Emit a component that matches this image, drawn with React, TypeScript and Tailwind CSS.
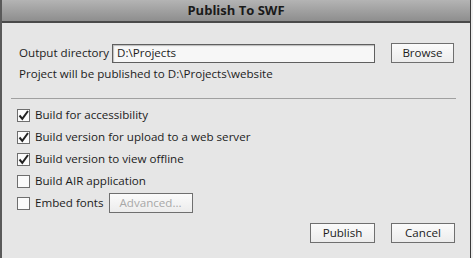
import React from 'react';

const Check: React.FC<{ checked?: boolean }> = ({ checked }) => (
  <span className="w-[13px] h-[13px] border border-[#6e6e6e] bg-[#fbfbfb] flex items-center justify-center shrink-0">
    {checked && (
      <svg width="11" height="11" viewBox="0 0 11 11">
        <path d="M1.5 5.5 L4.3 8.8 L10 1" fill="none" stroke="#222" strokeWidth="2" />
      </svg>
    )}
  </span>
);

const Btn: React.FC<{ label: string; className?: string; disabled?: boolean }> = ({ label, className = '', disabled }) => (
  <div
    className={`h-[20px] border border-[#6f6f6f] bg-gradient-to-b from-[#fbfbfb] to-[#ececec] flex items-center justify-center whitespace-nowrap ${
      disabled ? 'text-[#a8a8a8]' : 'text-[#1c1c1c]'
    } ${className}`}
  >
    {label}
  </div>
);

const rows = [
  { label: 'Build for accessibility', checked: true },
  { label: 'Build version for upload to a web server', checked: true },
  { label: 'Build version to view offline', checked: true },
  { label: 'Build AIR application', checked: false },
];

export default function App() {
  return (
    <div
      className="w-[473px] h-[258px] bg-[#e6e6e6] flex overflow-hidden"
      style={{ fontFamily: '"Open Sans", "Liberation Sans", sans-serif' }}
    >
      <div className="w-[471px] h-full flex flex-col border-l-2 border-l-[#5a5a5a] border-r border-r-[#3a3a3a]">
        {/* title bar */}
        <div className="h-[23px] shrink-0 bg-gradient-to-b from-[#b4b4b4] to-[#8e8e8e] border-b-2 border-b-[#4a4a4a] flex items-center justify-center">
          <span className="text-[13px] font-bold text-[#1a1a1a]">Publish To SWF</span>
        </div>

        {/* body */}
        <div className="flex flex-col text-[11.6px] text-[#1c1c1c] whitespace-nowrap">
          <div className="flex items-center h-[20px] mt-[20px] pl-[17px]">
            <span className="w-[93px]">Output directory</span>
            <div className="w-[263px] h-[19px] border border-[#5f5f5f] bg-[#f7f7f7] shadow-[inset_1px_1px_1px_#bbb] flex items-center pl-[4px]">
              D:\Projects
            </div>
            <Btn label="Browse" className="ml-[16px] w-[63px]" />
          </div>
          <div className="pl-[17px] mt-[1px] h-[20px] flex items-center">
            Project will be published to D:\Projects\website
          </div>
          <div className="ml-[9px] mr-[14px] mt-[14px] border-t border-[#a0a0a0]" />

          <div className="flex flex-col pl-[15px] mt-[5px]">
            {rows.map((r) => (
              <div key={r.label} className="h-[22px] flex items-center gap-[5px]">
                <Check checked={r.checked} />
                <span>{r.label}</span>
              </div>
            ))}
            <div className="h-[22px] flex items-center gap-[5px]">
              <Check />
              <span>Embed fonts</span>
              <Btn label="Advanced..." disabled className="w-[84px]" />
            </div>
          </div>

          <div className="flex justify-end gap-[16px] pr-[15px] mt-[9px]">
            <Btn label="Publish" className="w-[65px]" />
            <Btn label="Cancel" className="w-[64px]" />
          </div>
        </div>
      </div>
      <div className="flex-1 bg-[#f0f0f0]" />
    </div>
  );
}
